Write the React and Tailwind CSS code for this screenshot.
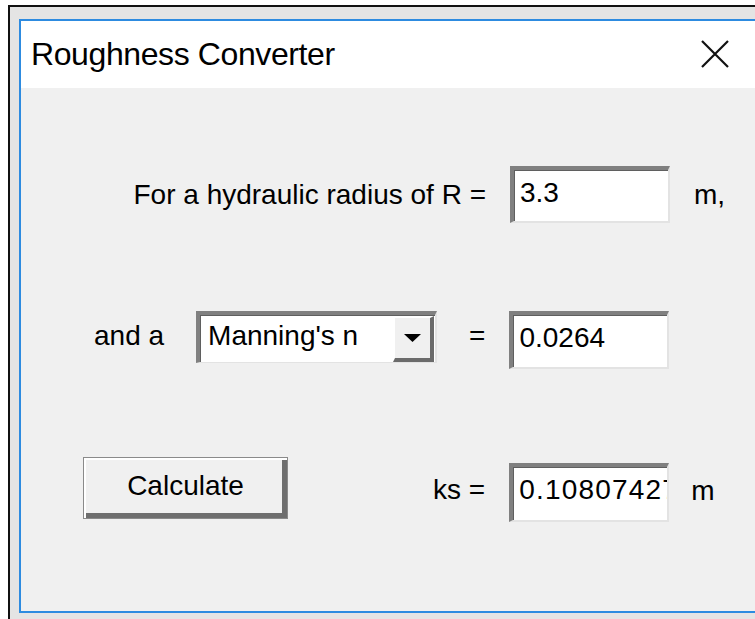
import React from "react";

const ui = { fontFamily: '"Liberation Sans", Arial, sans-serif' };

function Field({ value, width = "w-[160px]", height = "h-[57px]", extra = "" }) {
  return (
    <div
      className={`${width} ${height} shrink-0 overflow-hidden bg-white border-t-[4px] border-l-[4px] border-r-2 border-b-2 border-t-[#808080] border-l-[#808080] border-r-[#e3e3e3] border-b-[#e3e3e3] shadow-[inset_1px_1px_0_#5f5f5f] pl-[6px] pt-[7px] text-[28px] leading-[32px] whitespace-nowrap ${extra}`}
    >
      {value}
    </div>
  );
}

function ComboBox() {
  return (
    <div className="w-[241px] h-[52px] shrink-0 flex bg-white border-t-[4px] border-l-[4px] border-r-2 border-b-[1px] border-t-[#808080] border-l-[#808080] border-r-[#e3e3e3] border-b-[#e3e3e3] shadow-[inset_1px_1px_0_#5f5f5f]">
      <div className="flex-1 pl-[8px] pt-[5px] text-[28px] leading-[32px] whitespace-nowrap">
        Manning's n
      </div>
      <div className="w-[41px] h-[46px] mt-[1px] mr-[1px] flex items-center justify-center bg-[#f0f0f0] border-t-2 border-l-2 border-r-[4px] border-b-[4px] border-t-white border-l-white border-r-[#6b6b6b] border-b-[#6b6b6b]">
        <svg width="17" height="8" viewBox="0 0 17 8">
          <polygon points="0,0 17,0 8.5,8" fill="#000" />
        </svg>
      </div>
    </div>
  );
}

export default function App() {
  return (
    <div className="w-[755px] h-[619px] overflow-hidden bg-white" style={ui}>
      <div className="pt-[5px] pl-[8px] h-full">
        <div className="h-full border-l-2 border-t-2 border-[#111] bg-[#e4e4e4] pl-[9px] pt-[12px]">
          <div className="w-[760px] h-[594px] flex flex-col border-t-2 border-l-2 border-b-2 border-[#2d8be0] bg-[#f0f0f0] text-black">
            {/* title bar */}
            <div className="h-[67px] shrink-0 bg-white flex items-center justify-between pl-[10px]">
              <span className="text-[32px] leading-none tracking-[-0.4px] mt-[-2px]">
                Roughness Converter
              </span>
              <svg
                className="mr-[50px] mt-[-2px]"
                width="28"
                height="28"
                viewBox="0 0 28 28"
              >
                <path d="M1 1 L27 27 M27 1 L1 27" stroke="#111" strokeWidth="2.2" />
              </svg>
            </div>

            {/* body */}
            <div className="flex flex-col text-[28px] leading-[32px]">
              {/* hydraulic radius row */}
              <div className="mt-[78px] h-[57px] flex items-center">
                <span className="w-[465px] text-right whitespace-nowrap">
                  For a hydraulic radius of R =
                </span>
                <div className="ml-[24px]">
                  <Field value="3.3" />
                </div>
                <span className="ml-[24px]">m,</span>
              </div>

              {/* roughness type row */}
              <div className="mt-[88px] h-[58px] flex items-start">
                <span className="ml-[73px] mt-[9px] whitespace-nowrap">and a</span>
                <div className="ml-[32px]">
                  <ComboBox />
                </div>
                <span className="ml-[32px] mt-[9px]">=</span>
                <div className="ml-[24px]">
                  <Field value="0.0264" height="h-[58px]" />
                </div>
              </div>

              {/* result row */}
              <div className="mt-[88px] h-[65px] flex items-start">
                <button
                  className="ml-[62px] w-[205px] h-[62px] shrink-0 bg-[#f0f0f0] border border-[#8a8a8a] shadow-[inset_2px_2px_0_#ffffff,inset_-5px_-5px_0_#6e6e6e] text-[28px] leading-[32px] pb-[4px]"
                  style={ui}
                >
                  Calculate
                </button>
                <span className="ml-[145px] mt-[17px] whitespace-nowrap">ks =</span>
                <div className="ml-[24px] mt-[6px]">
                  <Field value="0.10807427" height="h-[59px]" extra="tracking-[1.2px]" />
                </div>
                <span className="ml-[22px] mt-[18px]">m</span>
              </div>
            </div>
          </div>
        </div>
      </div>
    </div>
  );
}
